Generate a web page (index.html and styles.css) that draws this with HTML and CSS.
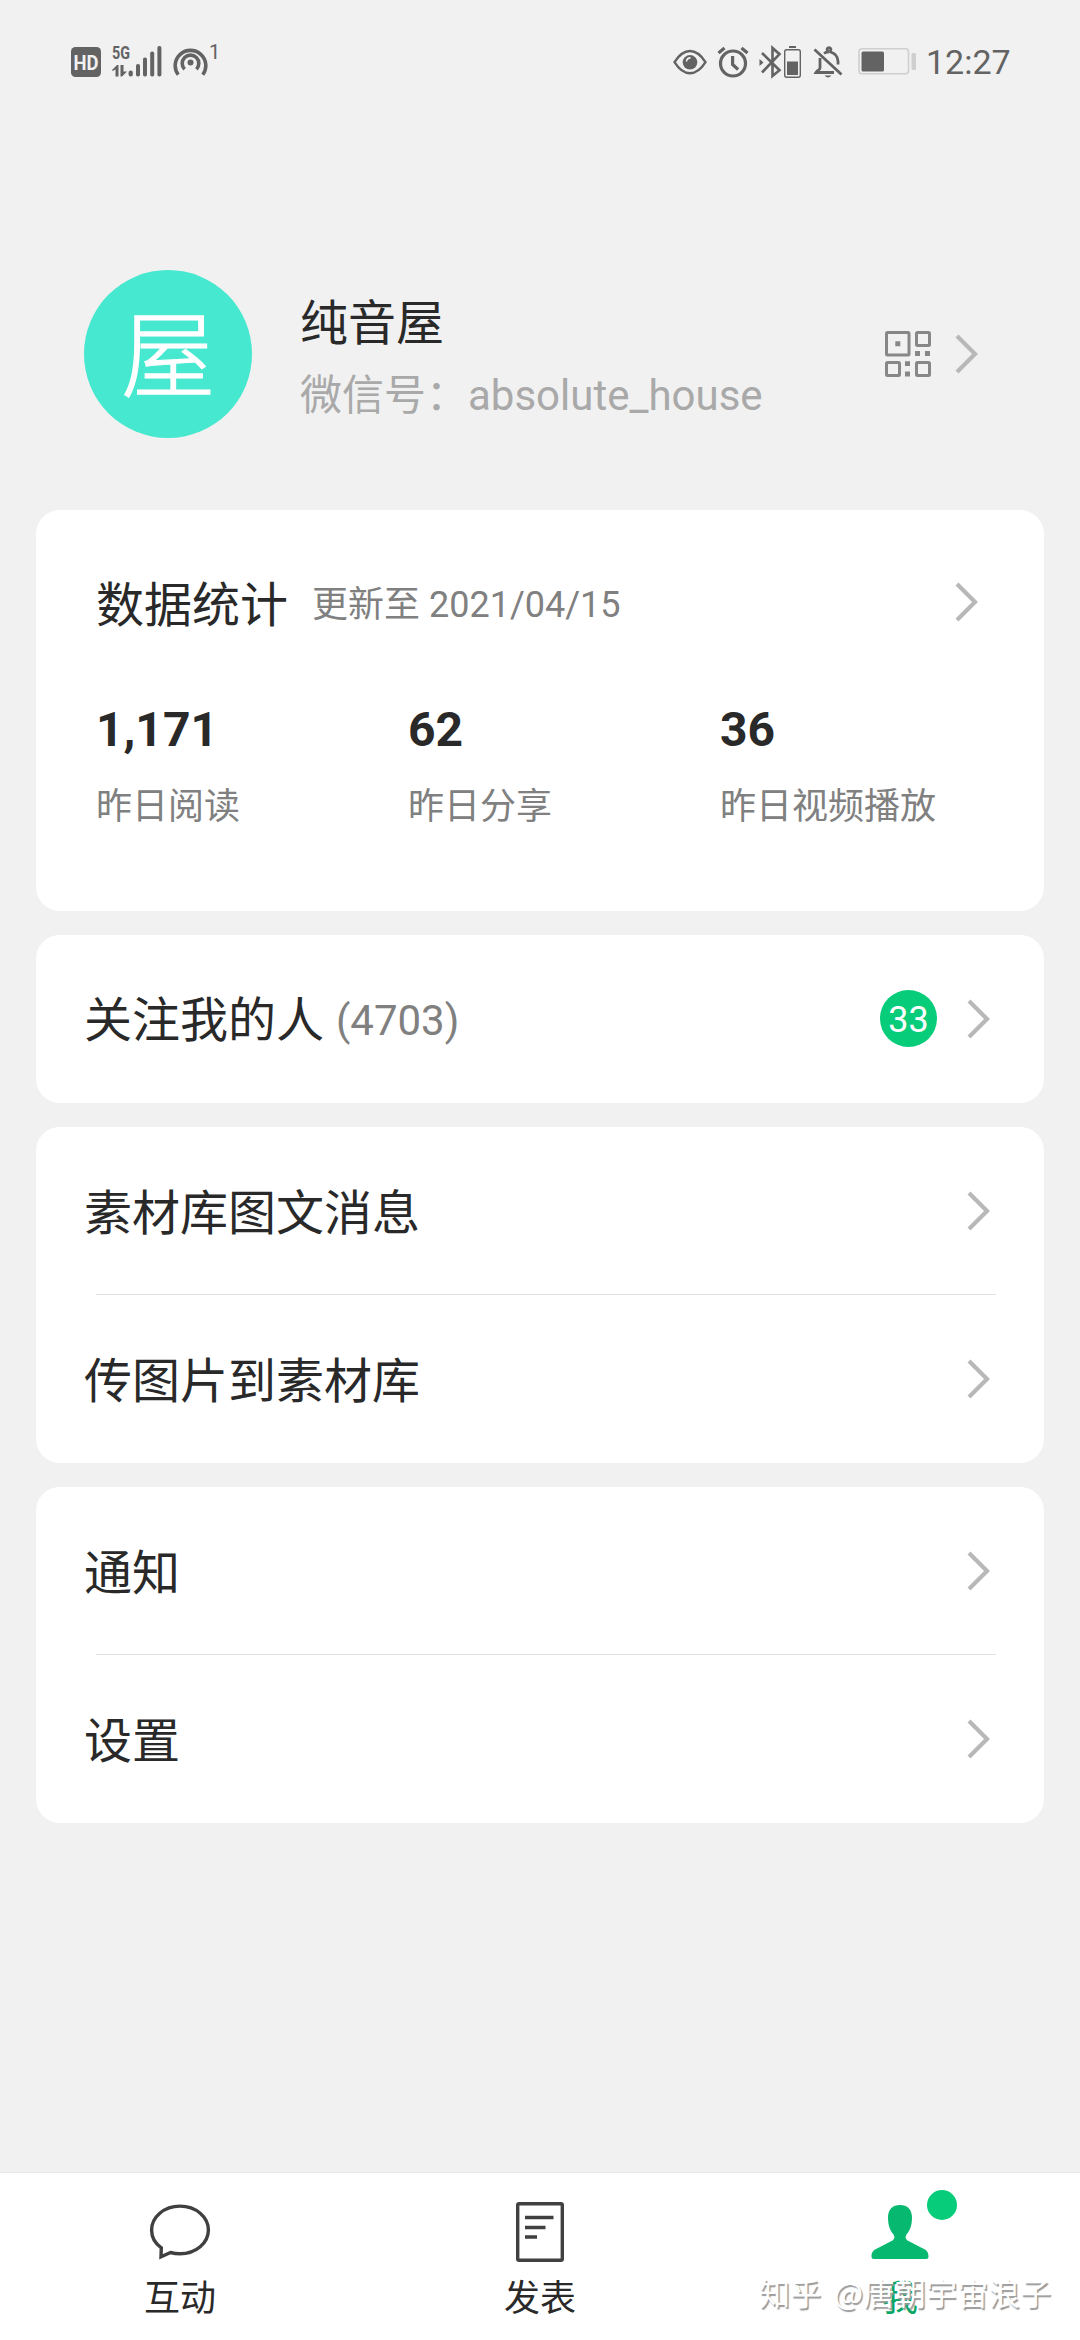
FILE: index.html
```html
<!DOCTYPE html>
<html lang="zh-CN">
<head>
<meta charset="utf-8">
<title>我</title>
<link rel="stylesheet" href="styles.css">
</head>
<body>
<svg class="defs" width="0" height="0">
  <symbol id="chevron" viewBox="0 0 24 40"><path d="M2 2L20 20L2 38" fill="none" stroke="#b8b8b8" stroke-width="4.2"/></symbol>
</svg>
<div class="screen">
  <header class="status">
    <div class="status-left">
      <svg width="30" height="30" viewBox="71 47 30 30"><rect x="71" y="47" width="30" height="30" rx="4.5" fill="#636363"/><text x="86" y="69.600" class="hd" text-anchor="middle" textLength="25" lengthAdjust="spacingAndGlyphs">HD</text></svg>
      <svg width="52" height="42" viewBox="111 41 52 42" fill="#636363"><text x="112" y="59.400" class="g5" textLength="18" lengthAdjust="spacingAndGlyphs">5G</text><path d="M112 70l5-5h1.500v11.500h-3V69.500l-3 1.500zM120.500 65h3v6.500h3.500l-5 5h-1.500z"/><rect x="128.600" y="70.500" width="4.200" height="6" rx="2"/><rect x="136" y="64" width="4" height="12.500" rx="1.800"/><rect x="143" y="57.500" width="4" height="19" rx="1.800"/><rect x="150.200" y="51.500" width="4" height="25" rx="1.800"/><rect x="157.400" y="46" width="4" height="30.500" rx="1.800"/></svg>
      <svg width="50" height="42" viewBox="173 41 50 42"><g fill="none" stroke="#636363" stroke-width="3.600"><path d="M178.200 74.800A15.300 15.300 0 1 1 202.800 74.800"/><path d="M184.600 69.300A8.300 8.300 0 1 1 196.400 69.300"/></g><circle cx="190.500" cy="62.500" r="3" fill="#636363"/><text x="209" y="59.400" class="one">1</text></svg>
    </div>
    <div class="status-right">
      <svg width="34" height="26" viewBox="672.500 48 34 26"><path d="M674 61.200Q681 50 689.500 50T705 61.200Q698 72.300 689.500 72.300T674 61.200Z" fill="none" stroke="#636363" stroke-width="2.400"/><circle cx="689.500" cy="61.300" r="7.300" fill="#636363"/><path d="M686 60.500a4 4 0 0 1 4-3.600" fill="none" stroke="#f1f1f1" stroke-width="1.600"/></svg>
      <svg width="32" height="32" viewBox="717 45 32 32" fill="none" stroke="#636363" stroke-width="3.200"><circle cx="733" cy="62.500" r="12.500"/><path d="M732.600 55v8.500l5.500 5M718.500 52l6-5M747.500 52l-6-5"/></svg>
      <svg width="44" height="34" viewBox="759 44 44 34"><path d="M762 52l17.500 17.200L772.500 75V47l7 6.200L762 71.500" fill="none" stroke="#636363" stroke-width="2.600"/><path d="M759.500 58l4 3.500-4 3.500z" fill="#636363"/><rect x="784.700" y="48.700" width="15.600" height="27.600" rx="2" fill="none" stroke="#636363" stroke-width="1.400"/><path d="M789 45h7v2h-7zM787 60.500h11v13.500h-11z" fill="#636363"/></svg>
      <svg width="30" height="34" viewBox="813 44 30 34" fill="none" stroke="#636363" stroke-width="2.800"><path d="M814.500 48.500L841.500 73.500M820 57v10c0 2-2.500 2-4 4.500h18"/><path d="M824 52.500q2-1.500 3.500-1.500v-1.500a1.800 1.800 0 1 1 3 0v1.500q7 2 7.500 9v3.500"/><path d="M824.500 74.500h7q-3.500 4-7 0z" fill="#636363" stroke="none"/></svg>
      <svg class="battery" width="60" height="30" viewBox="857 47 60 30"><rect x="859" y="48.800" width="49.500" height="25" rx="3" fill="none" stroke="#cfcfcf" stroke-width="1.600"/><rect x="861.500" y="51.500" width="22.500" height="20" rx="1.500" fill="#636363"/><rect x="911.500" y="53" width="4.500" height="17" rx="1.500" fill="#cfcfcf"/></svg>
      <span class="time">12:27</span>
    </div>
  </header>

  <section class="profile">
    <div class="avatar">屋</div>
    <div class="who">
      <h1 class="name">纯音屋</h1>
      <p class="wxid">微信号：absolute_house</p>
    </div>
    <svg class="qr" width="46" height="46" viewBox="0 0 46 46"><g fill="none" stroke="#878787" stroke-width="3"><rect x="1.500" y="1.500" width="22.500" height="22.500" rx="1"/><rect x="31.500" y="1.500" width="13" height="13" rx="1"/><rect x="1.500" y="31.500" width="13" height="13" rx="1"/><rect x="31.500" y="31.500" width="13" height="13" rx="1"/></g><path d="M10.300 10.300h5v5h-5zM30 20h5v5h-5zM40 20h5v5h-5zM20 30.300h5v4.700h-5zM20 40.500h5v5h-5z" fill="#878787"/></svg>
    <svg class="chev"><use href="#chevron"/></svg>
  </section>

  <main class="cards">
    <section class="card stats">
      <div class="stats-head">
        <h2 class="stats-title">数据统计</h2>
        <span class="stats-date">更新至 2021/04/15</span>
        <svg class="chev"><use href="#chevron"/></svg>
      </div>
      <div class="stats-grid">
        <div><b class="num">1,171</b><span class="label">昨日阅读</span></div>
        <div><b class="num">62</b><span class="label">昨日分享</span></div>
        <div><b class="num">36</b><span class="label">昨日视频播放</span></div>
      </div>
    </section>
    <section class="card">
      <div class="row"><span class="row-text">关注我的人 <span class="count">(4703)</span></span><span class="badge">33</span><svg class="chev"><use href="#chevron"/></svg></div>
    </section>
    <section class="card">
      <div class="row"><span class="row-text">素材库图文消息</span><svg class="chev"><use href="#chevron"/></svg></div>
      <hr class="divider">
      <div class="row"><span class="row-text">传图片到素材库</span><svg class="chev"><use href="#chevron"/></svg></div>
    </section>
    <section class="card">
      <div class="row"><span class="row-text">通知</span><svg class="chev"><use href="#chevron"/></svg></div>
      <hr class="divider">
      <div class="row"><span class="row-text">设置</span><svg class="chev"><use href="#chevron"/></svg></div>
    </section>
  </main>

  <nav class="tabs">
    <div class="tab">
      <svg width="72" height="72" viewBox="0 0 72 72"><path d="M17.300 52.300C10.500 47.500 7.600 41.500 7.600 34.500C7.600 21.500 20 10.600 36 10.600S64.400 21.500 64.400 34.500S52 58.300 36 58.300Q31 58.300 26.500 57L17 61.300Z" transform="translate(0,-.5)" fill="none" stroke="#404040" stroke-width="3.400"/></svg>
      <span>互动</span>
    </div>
    <div class="tab">
      <svg width="72" height="72" viewBox="0 0 72 72"><rect x="13.700" y="7.700" width="44.600" height="56.600" rx="1.500" fill="none" stroke="#404040" stroke-width="3.400"/><path d="M21 21.500h28.500M21 31.500h20.500M21 41h12" stroke="#404040" stroke-width="3.400"/></svg>
      <span>发表</span>
    </div>
    <div class="tab active">
      <svg width="72" height="72" viewBox="0 0 72 72"><path d="M36 9C28.500 9 24 13.500 24 21.500C24 31 27 35.500 29.500 38.500C31 41 30.500 43 28.500 44.500L13 52.500C8.500 54.500 7.500 57 7.500 60.500Q7.500 63 10 63H62Q64.500 63 64.500 60.500C64.500 57 63.500 54.500 59 52.500L43.500 44.500C41.500 43 41 41 42.500 38.500C45 35.500 48 31 48 21.500C48 13.500 43.500 9 36 9Z" fill="#07b870"/></svg>
      <i class="dot"></i>
      <span>我</span>
    </div>
    <div class="watermark">知乎 @唐朝宇宙浪子</div>
  </nav>
</div>
</body>
</html>
```
FILE: styles.css
```css
* { box-sizing: border-box; margin: 0; padding: 0; }
body {
  width: 1080px;
  background: #f1f1f1;
  color: #292929;
  font-family: Roboto, "Noto Sans CJK SC", sans-serif;
}
.defs { position: absolute; }
.screen { height: 2340px; display: flex; flex-direction: column; overflow: hidden; }

.status {
  height: 124px;
  padding: 0 71px;
  display: flex;
  justify-content: space-between;
  align-items: center;
  color: #636363;
}
.status-left, .status-right { display: flex; align-items: center; gap: 10px; }
.battery { margin-left: 4px; }
.time { font-size: 34px; line-height: 40px; width: 83px; margin: 0 0 0 -1px; white-space: nowrap; }
.hd { font: 700 21px Roboto, sans-serif; fill: #f1f1f1; }
.g5 { font: 700 19px Roboto, sans-serif; }
.one { font: 400 20px Roboto, sans-serif; fill: #636363; }

.profile {
  height: 168px;
  margin: 146px 101px 0 84px;
  display: flex;
  align-items: center;
}
.avatar {
  width: 168px;
  height: 168px;
  border-radius: 50%;
  background: #46e8cf;
  color: #fff;
  font-size: 94px;
  font-weight: 300;
  line-height: 176px;
  text-align: center;
  -webkit-text-stroke: 1.2px #fff;
}
.who { flex: 1; margin-left: 48px; padding-top: 6px; }
.name { font-size: 48px; font-weight: 400; line-height: 60px; }
.wxid { font-size: 42px; line-height: 50px; margin-top: 17px; color: #a9a9a9; }
.chev { width: 24px; height: 40px; flex: none; }
.qr { margin-right: 24px; }

.cards { margin: 72px 36px 0; display: flex; flex-direction: column; gap: 24px; }
.card { background: #fff; border-radius: 24px; }

.stats { height: 401px; padding: 62px 65px 0 60px; }
.stats-head { display: flex; align-items: center; height: 60px; }
.stats-title { font-size: 48px; font-weight: 400; line-height: 60px; margin-top: 8px; }
.stats-date { flex: 1; font-size: 36px; line-height: 60px; margin: 6px 0 0 24px; color: #808080; }
.stats-grid { display: grid; grid-template-columns: repeat(3, 312px); margin-top: 70px; }
.num, .label { display: block; white-space: nowrap; }
.num { font-size: 48px; line-height: 56px; }
.label { font-size: 36px; line-height: 42px; margin-top: 28px; color: #808080; }

.row { height: 168px; padding: 0 53px 0 48px; display: flex; align-items: center; }
.row-text { flex: 1; font-size: 48px; line-height: 60px; padding-top: 5px; }
.count { display: inline-block; font-size: 42px; transform: translateY(-2px); color: #808080; }
.badge {
  width: 57px;
  height: 57px;
  margin: 0 30px 1px 0;
  border-radius: 50%;
  background: #07cc79;
  color: #fff;
  font-size: 36px;
  line-height: 60px;
  text-align: center;
}
.divider { height: 1px; margin: -1px 48px 0 60px; border: 0; background: #e3e3e3; }

.tabs {
  position: relative;
  height: 168px;
  margin-top: auto;
  display: grid;
  grid-template-columns: repeat(3, 1fr);
  background: #fff;
  border-top: 1px solid #e8e8e8;
}
.tab { position: relative; display: flex; flex-direction: column; align-items: center; padding-top: 23px; font-size: 36px; line-height: 42px; }
.tab span { margin-top: 10px; }
.active { color: #07a566; }
.dot { position: absolute; left: 207px; top: 17px; width: 30px; height: 30px; border-radius: 50%; background: #07cc79; }
.watermark {
  position: absolute;
  left: 759px;
  top: 100px;
  font-family: "Noto Sans CJK SC", sans-serif;
  font-size: 31px;
  line-height: 38px;
  letter-spacing: .3px;
  word-spacing: 5px;
  white-space: nowrap;
  color: #fff;
  text-shadow: 1.5px 1.5px 1px #999;
}
```
